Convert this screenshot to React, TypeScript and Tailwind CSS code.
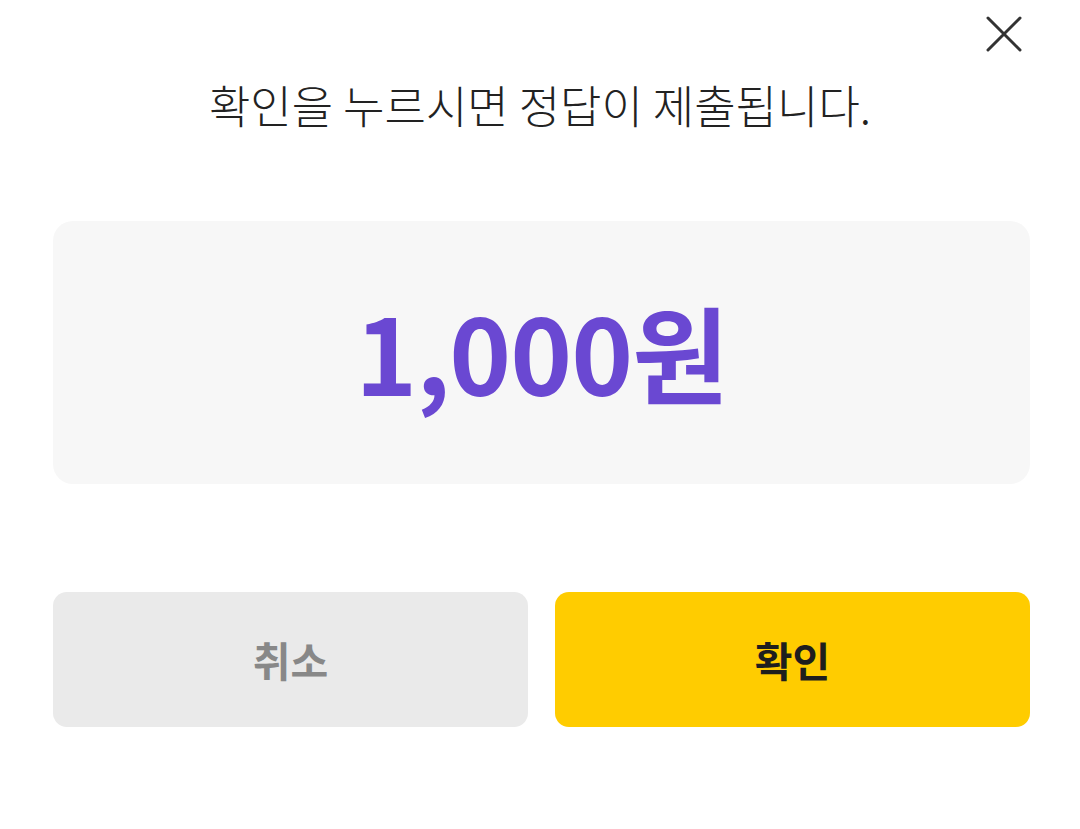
export default function App() {
  const font = { fontFamily: '"Noto Sans CJK KR", "Noto Sans", sans-serif' };
  return (
    <div className="w-[1080px] h-[829px] bg-white flex flex-col" style={font}>
      <div className="flex justify-end pt-[16px] pr-[58px] h-[52px]">
        <button className="w-[36px] h-[36px] flex items-center justify-center">
          <svg width="36" height="36" viewBox="0 0 36 36">
            <path d="M2 2 L34 34 M34 2 L2 34" stroke="#333333" strokeWidth="3" strokeLinecap="round" />
          </svg>
        </button>
      </div>
      <div className="mt-[28px] h-[50px] flex items-center justify-center text-[45px] leading-[50px] text-[#222222] font-light">
        확인을 누르시면 정답이 제출됩니다.
      </div>
      <div className="ml-[53px] mr-[50px] mt-[91px] h-[263px] rounded-[20px] bg-[#f7f7f7] flex items-center justify-center">
        <span className="text-[105px] font-semibold text-[#6a48d2] leading-none tracking-[-1px] -mt-[4px]">1,000원</span>
      </div>
      <div className="ml-[53px] mr-[50px] mt-[108px] h-[135px] flex gap-[27px]">
        <button className="flex-1 rounded-[14px] bg-[#eaeaea] text-[#888888] text-[41px] font-bold flex items-center justify-center">
          취소
        </button>
        <button className="flex-1 rounded-[14px] bg-[#ffcc00] text-[#1e1e1e] text-[41px] font-bold flex items-center justify-center">
          확인
        </button>
      </div>
    </div>
  );
}
